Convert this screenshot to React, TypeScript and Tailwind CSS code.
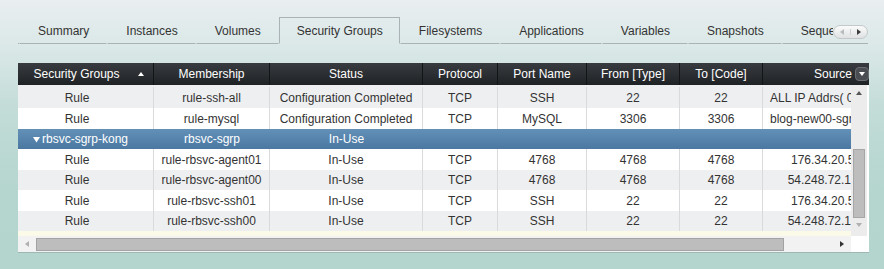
import { ReactNode } from 'react';

const TABS = ['Summary', 'Instances', 'Volumes', 'Security Groups', 'Filesystems', 'Applications', 'Variables', 'Snapshots', 'Sequences'];
const ACTIVE = 'Security Groups';

// widths of the grid columns, Source is wider than what is visible
const COLS = [
  { label: 'Security Groups', w: 'w-[136px]' },
  { label: 'Membership', w: 'w-[116px]' },
  { label: 'Status', w: 'w-[153px]' },
  { label: 'Protocol', w: 'w-[75px]' },
  { label: 'Port Name', w: 'w-[89px]' },
  { label: 'From [Type]', w: 'w-[93px]' },
  { label: 'To [Code]', w: 'w-[83px]' },
];

type Row = { kind: 'rule'; cells: string[] } | { kind: 'group'; name: string; member: string; status: string };

const ROWS: Row[] = [
  { kind: 'rule', cells: ['Rule', 'rule-ssh-all', 'Configuration Completed', 'TCP', 'SSH', '22', '22', 'ALL IP Addrs( 0.0.0.0/0 )'] },
  { kind: 'rule', cells: ['Rule', 'rule-mysql', 'Configuration Completed', 'TCP', 'MySQL', '3306', '3306', 'blog-new00-sgrp-default'] },
  { kind: 'group', name: 'rbsvc-sgrp-kong', member: 'rbsvc-sgrp', status: 'In-Use' },
  { kind: 'rule', cells: ['Rule', 'rule-rbsvc-agent01', 'In-Use', 'TCP', '4768', '4768', '4768', '176.34.20.52'] },
  { kind: 'rule', cells: ['Rule', 'rule-rbsvc-agent00', 'In-Use', 'TCP', '4768', '4768', '4768', '54.248.72.150'] },
  { kind: 'rule', cells: ['Rule', 'rule-rbsvc-ssh01', 'In-Use', 'TCP', 'SSH', '22', '22', '176.34.20.52'] },
  { kind: 'rule', cells: ['Rule', 'rule-rbsvc-ssh00', 'In-Use', 'TCP', 'SSH', '22', '22', '54.248.72.150'] },
];

const HEIGHTS = ['h-[23px] pt-[2px]', 'h-[21px]', 'h-[20px]', 'h-[21px]', 'h-[20px]', 'h-[21px]', 'h-[20px]'];

function Tri({ dir, className }: { dir: 'up' | 'down' | 'left' | 'right'; className?: string }) {
  const pts = {
    up: '0,5 3,1 6,5',
    down: '0,1 6,1 3,5',
    left: '5,0 5,6 1,3',
    right: '1,0 1,6 5,3',
  }[dir];
  return (
    <svg width="6" height="6" viewBox="0 0 6 6" className={className}>
      <polygon points={pts} fill="currentColor" />
    </svg>
  );
}

function Cell({ w, children, className = '' }: { w: string; children?: ReactNode; className?: string }) {
  return (
    <div className={`${w} flex-none flex items-center justify-center overflow-hidden whitespace-nowrap px-[7px] ${className}`}>
      <span className="min-w-0">{children}</span>
    </div>
  );
}

export default function App() {
  return (
    <div className="w-[884px] h-[269px] overflow-hidden bg-[linear-gradient(180deg,#e9eef0_0%,#dae8e7_18%,#c3dcd7_40%,#b5d6cf_70%,#b3d5cd_100%)] font-['Liberation_Sans',Arial,sans-serif] text-[12px] text-[#333]">
      {/* tab strip */}
      <div className="ml-[18px] mt-[17px] flex h-[27px] w-[850px]">
        <div className="flex w-[815px] flex-none overflow-hidden">
          <div className="w-[1px] flex-none border-b border-[#a9b3b5]" />
          {TABS.map((t) =>
            t === ACTIVE ? (
              <div key={t} className="flex flex-none items-center whitespace-nowrap border border-b-transparent border-[#a9b3b5] pl-[17px] pr-[16px]">
                {t}
              </div>
            ) : (
              <div key={t} className="flex flex-none items-center whitespace-nowrap border border-transparent border-b-[#a9b3b5] pl-[18px] pr-[17px]">
                {t}
              </div>
            ),
          )}
        </div>
        <div className="flex flex-1 items-start border-b border-[#a9b3b5] pt-[8px]">
          <div className="flex h-[14px] w-[35px] items-center rounded-[7px] border border-[#c4c8ca] bg-[linear-gradient(180deg,#fbfbfb,#dfe1e2)]">
            <div className="flex flex-1 justify-center border-r border-[#cfd2d3] text-[#b8bcbe]">
              <Tri dir="left" />
            </div>
            <div className="flex flex-1 justify-center text-[#3c3c3c]">
              <Tri dir="right" />
            </div>
          </div>
        </div>
      </div>

      {/* grid panel */}
      <div className="ml-[18px] mt-[19px] w-[851px] border-b border-[#9fb7b2] bg-white">
        <div className="flex h-[22px] bg-[linear-gradient(180deg,#383c40,#1f2225)] text-white">
          {COLS.map((c, i) =>
            i === 0 ? (
              <div key={c.label} className={`${c.w} relative flex flex-none items-center justify-center border-r border-[#121416] pr-[18px]`}>
                {c.label}
                <Tri dir="up" className="absolute left-[120px] top-[8px] text-white" />
              </div>
            ) : (
              <div key={c.label} className={`${c.w} flex flex-none items-center justify-center border-r border-[#121416]`}>
                {c.label}
              </div>
            ),
          )}
          <div className="flex flex-1 items-center justify-end">
            <span>Source</span>
            <div className="ml-[3px] flex h-[14px] w-[14px] items-center justify-center rounded-[4px] border border-[#6a6e72] bg-[#4a4e52] text-white">
              <Tri dir="down" />
            </div>
          </div>
        </div>

        <div className="flex">
          <div className="w-[833px] flex-none overflow-hidden">
            <div className="w-[871px]">
              {ROWS.map((r, i) =>
                r.kind === 'group' ? (
                  <div key={i} className={`flex ${HEIGHTS[i]} bg-[linear-gradient(180deg,#6290b7,#4a78a1)] text-white`}>
                    <div className="flex w-[136px] flex-none items-center gap-[1px] pl-[15px] whitespace-nowrap">
                      <svg width="8" height="7" viewBox="0 0 8 7">
                        <polygon points="0,1 7,1 3.5,6.5" fill="white" />
                      </svg>
                      <span>{r.name}</span>
                    </div>
                    <Cell w="w-[116px]">{r.member}</Cell>
                    <Cell w="w-[153px]">{r.status}</Cell>
                  </div>
                ) : (
                  <div key={i} className={`flex ${HEIGHTS[i]} ${i % 2 === 0 ? 'bg-[#eeeff1]' : 'bg-white'}`}>
                    {r.cells.map((v, j) =>
                      j < COLS.length ? (
                        <Cell key={j} w={COLS[j].w} className={`border-r border-[#d9dadc] ${j === 0 ? 'pr-[24px]' : ''}`}>
                          {v}
                        </Cell>
                      ) : (
                        <Cell key={j} w="w-[126px]" className="justify-start">
                          <span className="block w-[112px] text-center">{v}</span>
                        </Cell>
                      ),
                    )}
                  </div>
                ),
              )}
            </div>
            <div className="h-[5px] bg-[#fbf9e8]" />
          </div>

          {/* vertical scrollbar */}
          <div className="flex w-[16px] flex-none flex-col bg-[#ececec]">
            <div className="flex h-[16px] items-center justify-center text-[#555]">
              <Tri dir="up" />
            </div>
            <div className="h-[48px]" />
            <div className="mx-[2px] h-[69px] border border-[#a6a6a6] bg-[#bdbdbd]" />
            <div className="flex h-[13px] items-center justify-center text-[#b0b0b0]">
              <Tri dir="down" />
            </div>
            <div className="flex-1" />
          </div>
        </div>

        {/* horizontal scrollbar */}
        <div className="flex h-[16px]">
          <div className="flex w-[833px] flex-none items-center bg-[#f2f2f2]">
            <div className="flex w-[18px] flex-none justify-center text-[#b0b0b0]">
              <Tri dir="left" />
            </div>
            <div className="h-[13px] w-[748px] flex-none border border-[#a3a3a3] bg-[#bdbdbd]" />
            <div className="flex-1" />
            <div className="flex w-[18px] flex-none justify-center text-[#333]">
              <Tri dir="right" />
            </div>
          </div>
        </div>
      </div>
    </div>
  );
}
